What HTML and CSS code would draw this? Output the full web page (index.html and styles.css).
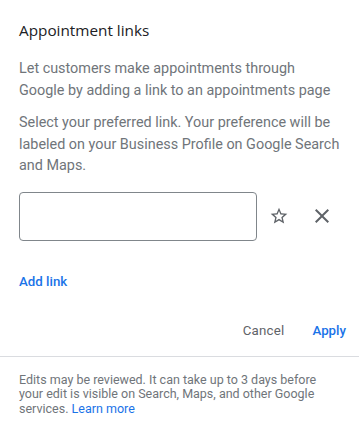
FILE: index.html
```html
<!DOCTYPE html>
<html>
<head>
<meta charset="utf-8">
<link rel="stylesheet" href="styles.css">
</head>
<body>
<div class="dialog">
  <div class="main">
    <h1 class="title">Appointment links</h1>
    <p class="desc first">Let customers make appointments through Google by adding a link to an appointments page</p>
    <p class="desc second">Select your preferred link. Your preference will be labeled on your Business Profile on Google Search and Maps.</p>
    <div class="link-row">
      <div class="input-box"></div>
      <span class="icon star">
        <svg viewBox="0 0 24 24" width="20" height="20"><path fill="#5f6368" d="M22 9.24l-7.19-.62L12 2 9.19 8.63 2 9.24l5.46 4.73L5.82 21 12 17.27 18.18 21l-1.63-7.03L22 9.24zM12 15.4l-3.76 2.27 1-4.28-3.32-2.88 4.38-.38L12 6.1l1.71 4.04 4.38.38-3.32 2.88 1 4.28L12 15.4z"/></svg>
      </span>
      <span class="icon close">
        <svg viewBox="0 0 24 24" width="24" height="24"><path fill="#5f6368" d="M19 6.41L17.59 5 12 10.59 6.41 5 5 6.41 10.59 12 5 17.59 6.41 19 12 13.41 17.59 19 19 17.59 13.41 12z"/></svg>
      </span>
    </div>
    <div class="add-link">Add link</div>
    <div class="actions">
      <span class="btn cancel">Cancel</span>
      <span class="btn apply">Apply</span>
    </div>
  </div>
  <div class="divider"></div>
  <p class="footer">Edits may be reviewed. It can take up to 3 days before your edit is visible on Search, Maps, and other Google services. <span class="learn">Learn more</span></p>
</div>
</body>
</html>
```
FILE: styles.css
```css
* { box-sizing: border-box; }
html, body { margin: 0; padding: 0; background: #fff; }
body { font-family: Roboto, "Noto Sans", Arial, sans-serif; }
.dialog { width: 359px; }
.main { padding: 0 13px 0 19px; }
.title {
  margin: 0;
  padding-top: 19px;
  font-family: "Open Sans", Roboto, sans-serif;
  font-weight: 400;
  font-size: 15.3px;
  line-height: 22px;
  color: #202124;
}
.desc {
  margin: 0;
  padding-right: 5px;
  font-size: 14.4px;
  line-height: 21.5px;
  color: #70757a;
}
.desc.first { margin-top: 17px; }
.desc.second { margin-top: 11px; }
.link-row {
  display: flex;
  align-items: center;
  margin-top: 15px;
}
.input-box {
  width: 238px;
  height: 49px;
  border: 1px solid #80868b;
  border-radius: 4px;
}
.icon { display: flex; align-items: center; justify-content: center; }
.star { margin-left: 12px; }
.close { margin-left: 21px; }
.add-link {
  margin-top: 31px;
  font-size: 13.3px;
  font-weight: 500;
  line-height: 20px;
  color: #1a73e8;
}
.actions {
  display: flex;
  justify-content: flex-end;
  gap: 28px;
  margin-top: 29px;
  font-size: 13.3px;
  line-height: 20px;
}
.cancel { color: #5f6368; font-weight: 400; letter-spacing: 0.2px; }
.apply { color: #1a73e8; font-weight: 500; }
.divider {
  margin-top: 15px;
  height: 1px;
  background: #dadce0;
}
.footer {
  margin: 0;
  padding: 16px 20px 0 19px;
  font-size: 12.5px;
  line-height: 14.8px;
  color: #70757a;
}
.learn { color: #1a73e8; }
```
